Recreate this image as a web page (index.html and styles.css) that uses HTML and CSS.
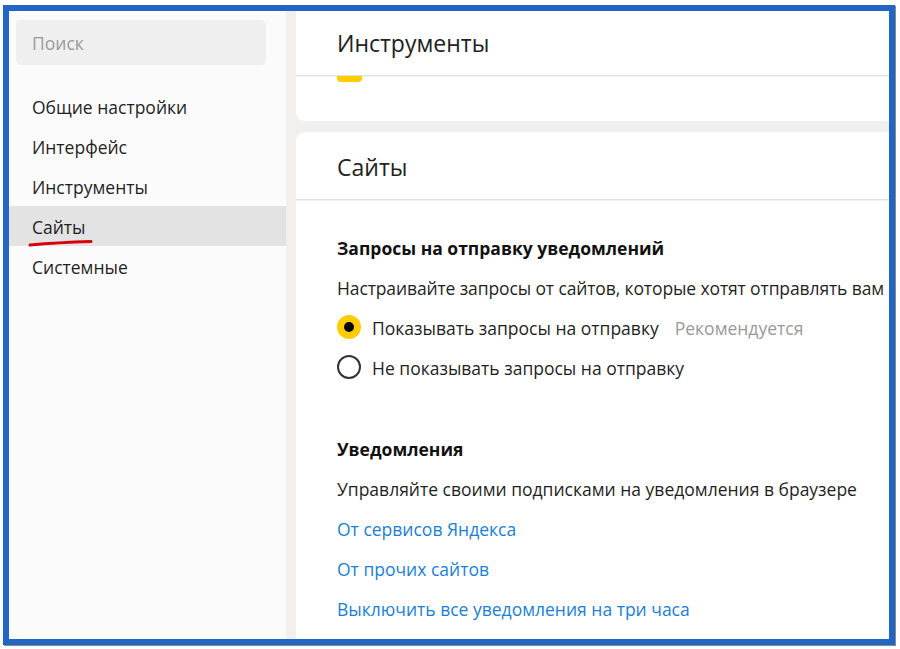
FILE: index.html
```html
<!DOCTYPE html>
<html lang="ru">
<head>
  <meta charset="UTF-8">
  <title>Настройки — Сайты</title>
  <link rel="stylesheet" href="styles.css">
</head>
<body>
  <div class="frame">
    <aside class="sidebar">
      <div class="search">Поиск</div>
      <nav class="menu">
        <div class="menu-item">Общие настройки</div>
        <div class="menu-item">Интерфейс</div>
        <div class="menu-item">Инструменты</div>
        <div class="menu-item active">
          Сайты
          <svg class="mark" width="66" height="8" viewBox="0 0 66 8">
            <path d="M2 6 Q 30 3.5 63 2.5" fill="none" stroke="#d9000d" stroke-width="3" stroke-linecap="round"/>
          </svg>
        </div>
        <div class="menu-item">Системные</div>
      </nav>
    </aside>

    <main class="content">
      <section class="card card-tools">
        <div class="card-head">Инструменты</div>
        <div class="card-peek"><span class="checkbox"></span></div>
      </section>

      <section class="card card-sites">
        <div class="card-head">Сайты</div>
        <div class="card-body">
          <div class="group">
            <div class="row group-title">Запросы на отправку уведомлений</div>
            <div class="row tight">Настраивайте запросы от сайтов, которые хотят отправлять вам</div>
            <div class="row radio checked"><span class="dot"></span>Показывать запросы на отправку <span class="hint">Рекомендуется</span></div>
            <div class="row radio"><span class="dot"></span>Не показывать запросы на отправку</div>
          </div>
          <div class="group">
            <div class="row group-title">Уведомления</div>
            <div class="row">Управляйте своими подписками на уведомления в браузере</div>
            <a class="row link" href="#">От сервисов Яндекса</a>
            <a class="row link" href="#">От прочих сайтов</a>
            <a class="row link" href="#">Выключить все уведомления на три часа</a>
          </div>
        </div>
      </section>
    </main>
  </div>
</body>
</html>
```

FILE: styles.css
```css
html, body {
    margin: 0;
    height: 100%;
    background: #fff;
    overflow: hidden;
}
body {
    font-family: "Open Sans", "Noto Sans", Arial, sans-serif;
    font-size: 17.5px;
    color: #1f1f1f;
}
.frame {
    margin: 5px 0 0 3px;
    width: 880px;
    height: 628px;
    border: 6px solid #2166c4;
    box-shadow: 1px 1px 0 #8a8a8a;
    display: grid;
    grid-template-columns: 277px 1fr;
    overflow: hidden;
}

/* left column */
.sidebar {
    background: #fbfbfb;
    padding: 9px 20px 0 7px;
}
.search {
    height: 45px;
    line-height: 47px;
    padding-left: 16px;
    border-radius: 5px;
    background: #efefef;
    color: #9a9a9a;
}
.menu {
    margin: 21px -20px 0 -7px;
}
.menu-item {
    position: relative;
    height: 40px;
    line-height: 43px;
    padding-left: 23px;
}
.menu-item.active {
    background: #e3e3e3;
}
.mark {
    position: absolute;
    left: 19px;
    top: 33px;
}

/* right column */
.content {
    background: #f1f0ef;
    padding-left: 10px;
    overflow: hidden;
    display: flex;
    flex-direction: column;
}
.card {
    background: #fff;
    margin-right: -30px;
}
.card-head {
    padding-left: 41px;
    font-size: 23px;
    color: #222;
    border-bottom: 1px solid #e2e2e2;
    box-shadow: 0 1px 0 #f2f2f2;
}
.card-tools {
    border-radius: 0 0 9px 9px;
}
.card-tools .card-head {
    height: 64px;
    line-height: 64px;
}
.card-peek {
    height: 45px;
    padding-left: 41px;
}
.checkbox {
    display: block;
    width: 25px;
    height: 6px;
    background: #fc0;
    border-radius: 0 0 4px 4px;
}
.card-sites {
    flex: 1;
    margin-top: 11px;
    border-radius: 9px 9px 0 0;
}
.card-sites .card-head {
    height: 67px;
    line-height: 71px;
}
.card-body {
    padding: 27px 41px 0;
}
.group + .group {
    margin-top: 41px;
}
.row {
    display: flex;
    align-items: center;
    height: 40px;
    padding-top: 1px;
    box-sizing: border-box;
    white-space: nowrap;
}
.tight {
    letter-spacing: -0.12px;
}
.group-title {
    font-weight: 700;
    color: #111;
}
.radio .dot {
    box-sizing: border-box;
    flex: none;
    width: 24px;
    height: 24px;
    margin: -1px 11px 0 0;
    border-radius: 50%;
    border: 2.5px solid #333;
}
.radio.checked .dot {
    border: 7px solid #fc0;
    background: #000;
}
.hint {
    margin-left: 16px;
    color: #999;
}
.link {
    color: #1a7fd6;
    text-decoration: none;
}
```
